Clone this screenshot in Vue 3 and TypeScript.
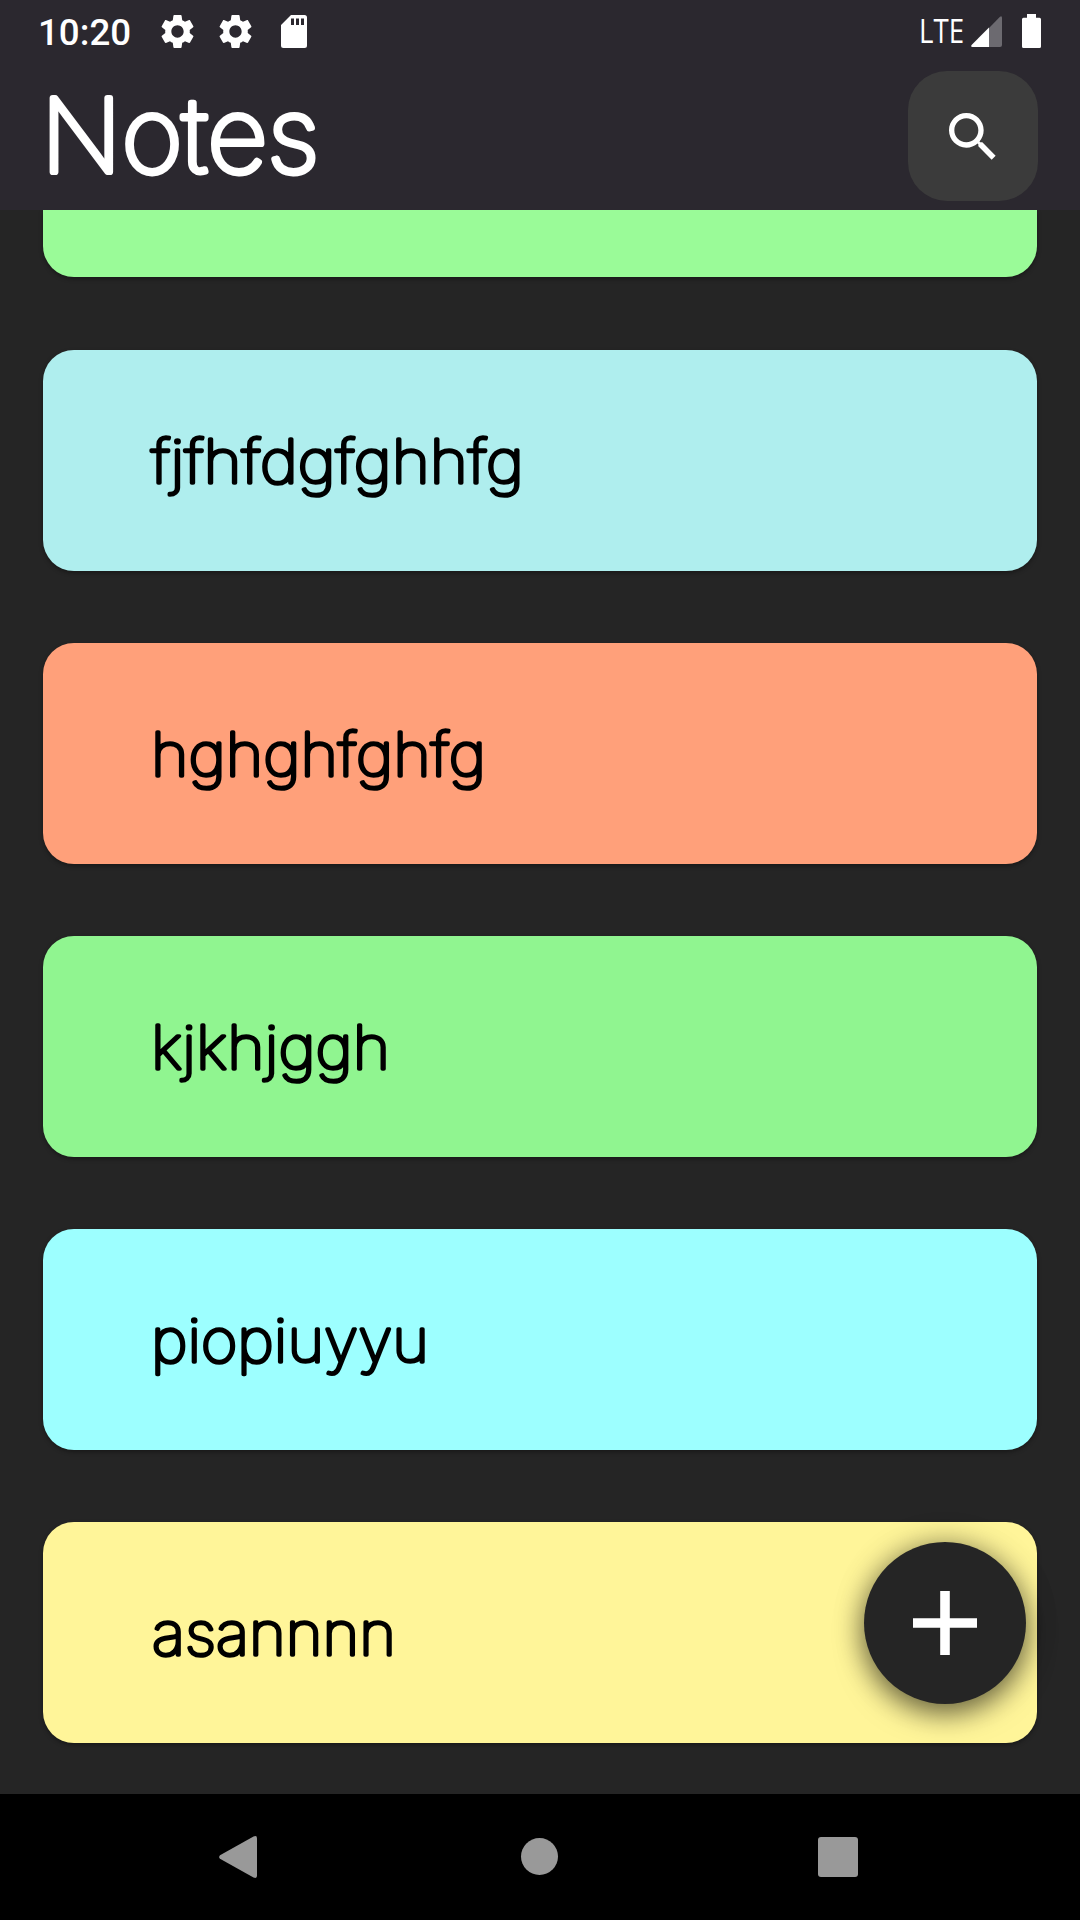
<script setup lang="ts">
interface Note {
  title: string
  color: string
  x: number
  length: number
}

const notes: Note[] = [
  { title: 'fjfhfdgfghhfg', color: '#afeeee', x: 108, length: 373 },
  { title: 'hghghfghfg', color: '#ffa07a', x: 108, length: 335 },
  { title: 'kjkhjggh', color: '#90f590', x: 108, length: 239 },
  { title: 'piopiuyyu', color: '#9dffff', x: 108, length: 278 },
  { title: 'asannnn', color: '#fff599', x: 109, length: 244 },
]

const gear =
  'M19.14 12.94c.04-.3.06-.61.06-.94 0-.32-.02-.64-.07-.94l2.03-1.58c.18-.14.23-.41.12-.61l-1.92-3.32c-.12-.22-.37-.29-.59-.22l-2.39.96c-.5-.38-1.03-.7-1.62-.94l-.36-2.54c-.04-.24-.24-.41-.48-.41h-3.84c-.24 0-.43.17-.47.41l-.36 2.54c-.59.24-1.13.57-1.62.94l-2.39-.96c-.22-.08-.47 0-.59.22L2.74 8.87c-.12.21-.08.47.12.61l2.03 1.58c-.05.3-.09.63-.09.94s.02.64.07.94l-2.03 1.58c-.18.14-.23.41-.12.61l1.92 3.32c.12.22.37.29.59.22l2.39-.96c.5.38 1.03.7 1.62.94l.36 2.54c.05.24.24.41.48.41h3.84c.24 0 .44-.17.47-.41l.36-2.54c.59-.24 1.13-.56 1.62-.94l2.39.96c.22.08.47 0 .59-.22l1.92-3.32c.12-.22.07-.47-.12-.61l-2.01-1.58zM12 15.6c-1.98 0-3.6-1.62-3.6-3.6s1.62-3.6 3.6-3.6 3.6 1.62 3.6 3.6-1.62 3.6-3.6 3.6z'
</script>

<template>
  <div class="screen">
    <header class="header">
      <div class="status">
        <span class="time">10:20</span>
        <svg v-for="n in 2" :key="n" class="gear" viewBox="0 0 24 24"><path :d="gear" /></svg>
        <svg class="sd" viewBox="0 0 26 33">
          <path fill-rule="evenodd" d="M10 0H23.5Q26 0 26 2.500V30.500Q26 33 23.500 33H2.500Q0 33 0 30.500V10ZM10 3.500V10H13V3.500ZM15 3.500V10H18V3.500ZM20 3.500V10H23V3.500Z" />
        </svg>
        <svg class="lte" viewBox="0 0 46 34">
          <text x="0" y="28" textLength="45" lengthAdjust="spacingAndGlyphs">LTE</text>
        </svg>
        <svg class="signal" viewBox="0 0 31 31">
          <path class="dim" d="M18 12 29 .8Q31-.6 31 2V29Q31 31 29 31H18Z" />
          <path d="M18 11.500V31H1.500Q-.8 31 .8 28.700Z" />
        </svg>
        <svg class="battery" viewBox="0 0 19 34">
          <path d="M5 0H14V3.700H17.500Q19 3.700 19 5.200V32.500Q19 34 17.500 34H1.500Q0 34 0 32.500V5.200Q0 3.700 1.500 3.700H5Z" />
        </svg>
      </div>
      <div class="bar">
        <svg class="title" viewBox="0 0 320 130">
          <text x="-2" y="100.500" textLength="278" lengthAdjust="spacingAndGlyphs">Notes</text>
        </svg>
        <button class="search" aria-label="Search">
          <svg viewBox="0 0 24 24">
            <path d="M15.500 14h-.79l-.28-.27C15.410 12.590 16 11.110 16 9.500 16 5.910 13.090 3 9.500 3S3 5.910 3 9.500 5.910 16 9.500 16c1.610 0 3.090-.59 4.230-1.570l.27.28v.79l5 4.990L20.490 19l-4.990-5zm-6 0C7.010 14 5 11.990 5 9.500S7.010 5 9.500 5 14 7.010 14 9.500 11.990 14 9.500 14z" />
          </svg>
        </button>
      </div>
    </header>

    <main class="list">
      <article class="card clipped"></article>
      <article v-for="note in notes" :key="note.title" class="card" :style="{ background: note.color }">
        <svg class="note" viewBox="0 0 600 221">
          <text :x="note.x" y="132.500" :textLength="note.length" lengthAdjust="spacingAndGlyphs">{{ note.title }}</text>
        </svg>
      </article>
      <button class="fab" aria-label="Add note">
        <svg viewBox="0 0 64 64"><path d="M27.200 0h9.600v27.200H64v9.600H36.800V64h-9.600V36.800H0v-9.600h27.200z" /></svg>
      </button>
    </main>

    <nav class="nav">
      <svg class="back" viewBox="0 0 38 42"><path d="M1 19.200 34.500.6Q38-.9 38 2.200V39.800Q38 42.900 34.500 41.400L1 22.800Q-.7 21 1 19.200Z" /></svg>
      <span class="home"></span>
      <span class="recent"></span>
    </nav>
  </div>
</template>

<style>
body {
  margin: 0;
  background: #252525;
}
</style>

<style scoped>
.screen {
  width: 1080px;
  height: 1920px;
  display: flex;
  flex-direction: column;
  overflow: hidden;
  background: #252525;
  font-family: Roboto, sans-serif;
}
svg {
  display: block;
  flex: none;
  fill: #fff;
}
button {
  border: 0;
  padding: 0;
  display: flex;
  align-items: center;
  justify-content: center;
}
.header {
  height: 210px;
  flex: none;
  background: #2b282f;
}
.status {
  height: 63px;
  display: flex;
  align-items: center;
  padding: 0 39px 0 38px;
}
.time {
  width: 102px;
  padding-top: 2px;
  font-size: 36.700px;
  font-weight: 500;
  line-height: 44px;
  color: #fff;
}
.gear {
  width: 41px;
  height: 41px;
  margin: 0 0 0 17px;
}
.sd {
  width: 26px;
  height: 33px;
  margin-left: 25px;
}
.lte {
  width: 46px;
  height: 34px;
  margin-left: auto;
  overflow: visible;
}
.lte text {
  font: 400 33px 'Open Sans', sans-serif;
}
.signal {
  width: 31px;
  height: 31px;
  margin-left: 6px;
}
.signal .dim {
  fill: #6c6a70;
}
.battery {
  width: 19px;
  height: 34px;
  margin-left: 20px;
  margin-top: -1px;
}
.bar {
  height: 147px;
  display: flex;
  justify-content: space-between;
  padding: 0 42px 0 43px;
}
.title {
  width: 320px;
  height: 130px;
  margin-top: 8px;
  overflow: visible;
}
.title text {
  font: 100 102px Inter, sans-serif;
  font-kerning: none;
  stroke: #fff;
  stroke-width: 6.200px;
  stroke-linejoin: round;
  stroke-linecap: round;
}
.search {
  width: 130px;
  height: 130px;
  margin-top: 8px;
  border-radius: 39px;
  background: #3b3b3b;
}
.search svg {
  width: 64px;
  height: 64px;
  margin-top: 1px;
}
.list {
  position: relative;
  height: 1584px;
  flex: none;
  overflow: hidden;
  display: flex;
  flex-direction: column;
  gap: 71.500px;
  padding: 0 43.300px 0 43px;
  box-sizing: border-box;
}
.card {
  height: 221.500px;
  flex: none;
  border-radius: 31px;
  box-shadow: 0 2px 4px rgba(0, 0, 0, 0.35);
}
.clipped {
  height: 67.400px;
  margin-bottom: 0.800px;
  border-radius: 0 0 31px 31px;
  background: #9afb98;
}
.note {
  width: 600px;
  height: 221px;
}
.note text {
  font: 100 59.500px Inter, sans-serif;
  fill: #000;
  stroke: #000;
  stroke-width: 3.600px;
  stroke-linejoin: round;
  stroke-linecap: round;
  font-variant-ligatures: none;
}
.fab {
  position: absolute;
  right: 54px;
  bottom: 90px;
  width: 162px;
  height: 162px;
  border-radius: 50%;
  background: #252525;
  box-shadow: 0 10px 28px rgba(0, 0, 0, 0.5), 0 0 30px rgba(0, 0, 0, 0.25);
}
.fab svg {
  width: 64px;
  height: 64px;
}
.nav {
  height: 126px;
  flex: none;
  display: flex;
  align-items: center;
  background: #000;
}
.back {
  width: 38px;
  height: 42px;
  margin-left: 219px;
  fill: #999;
}
.home {
  width: 37px;
  height: 37px;
  margin-left: 264px;
  margin-top: -1px;
  border-radius: 50%;
  background: #999;
}
.recent {
  width: 40px;
  height: 40px;
  margin-left: 260px;
  border-radius: 3px;
  background: #999;
}
</style>
